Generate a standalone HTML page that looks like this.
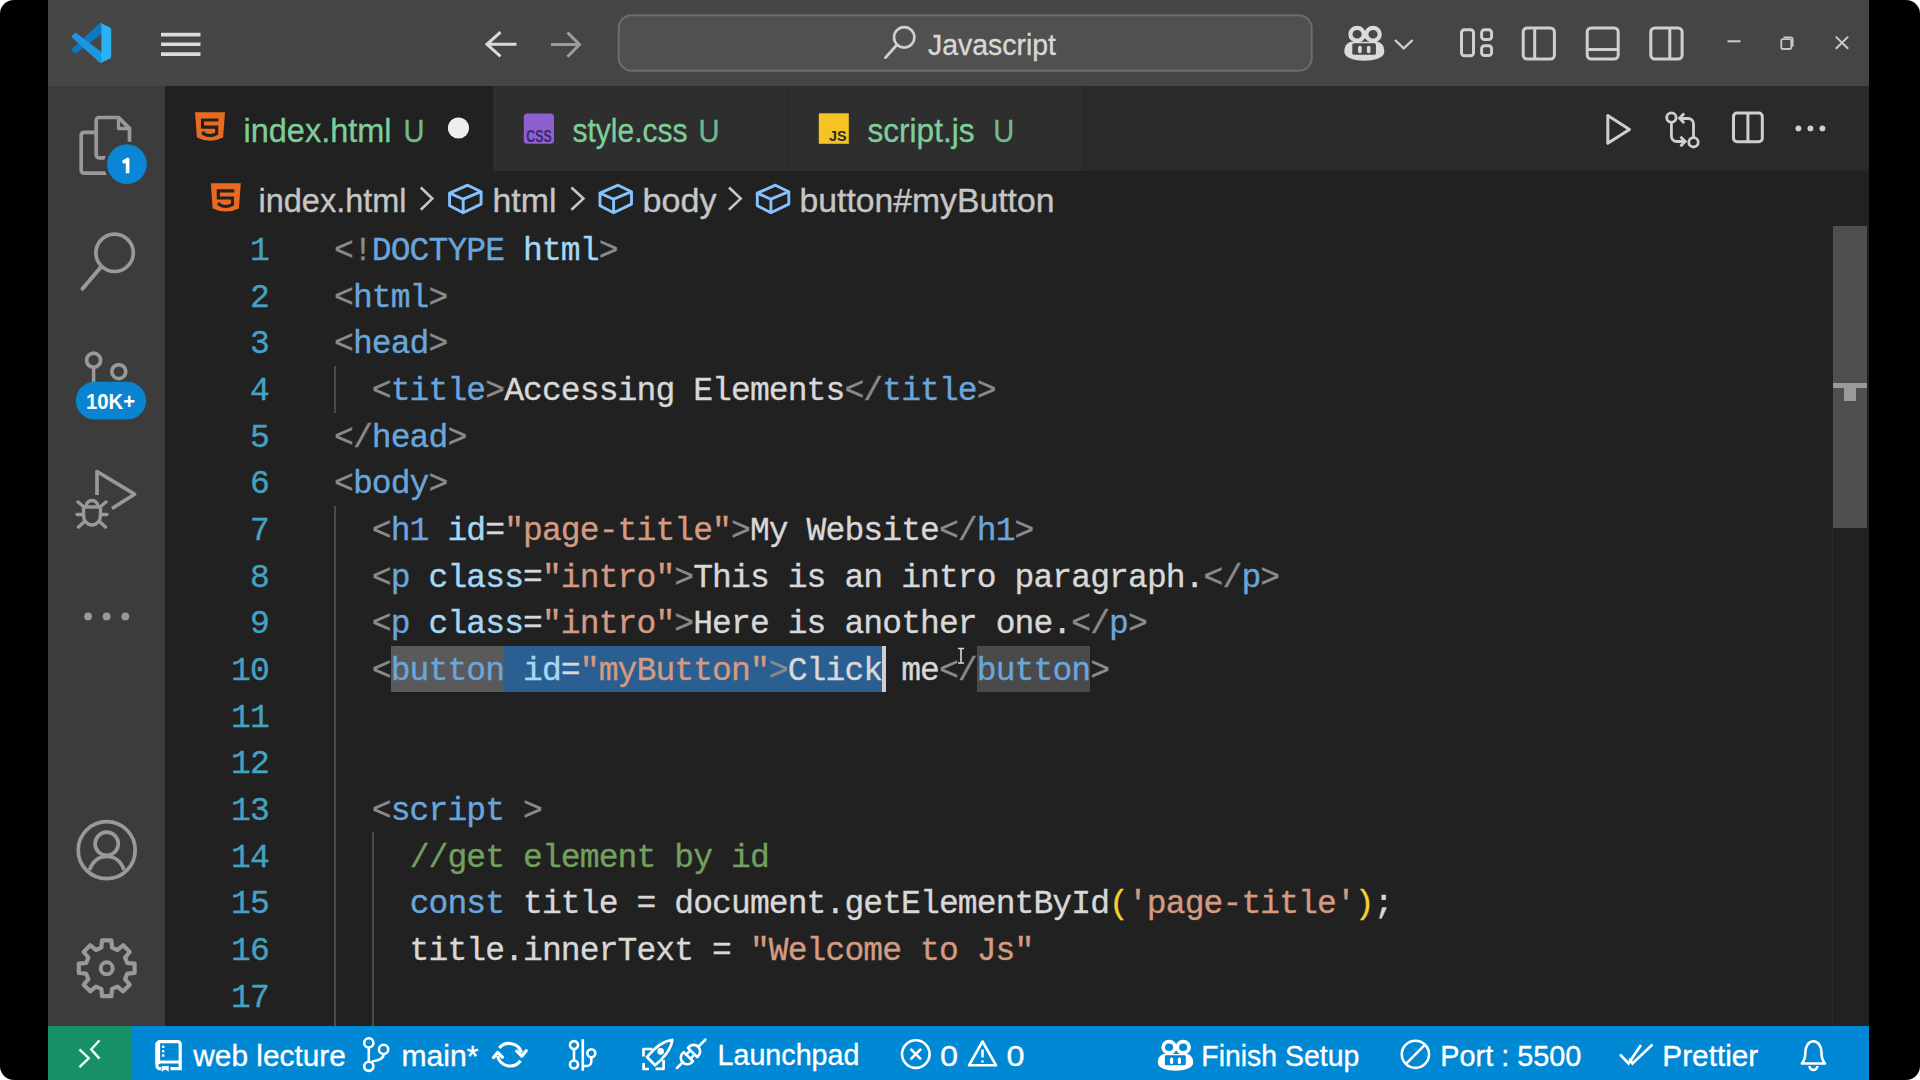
<!DOCTYPE html>
<html><head><meta charset="utf-8"><style>
*{margin:0;padding:0;box-sizing:border-box}
html,body{width:1920px;height:1080px;overflow:hidden;background:#fff}
#frame{position:absolute;left:0;top:0;width:1920px;height:1080px;background:#000;border-radius:14px;overflow:hidden}
.b{position:absolute}
.code{font-family:"Liberation Mono",monospace;font-size:33px;letter-spacing:-0.9px;white-space:pre;position:absolute;left:334px;height:46.65px;line-height:46.65px;color:#d8d8d8;-webkit-text-stroke:0.35px currentColor}
.ln{font-family:"Liberation Mono",monospace;font-size:33px;letter-spacing:-0.9px;white-space:pre;position:absolute;width:100px;left:168.8px;text-align:right;height:46.65px;line-height:46.65px;color:#45a2c2;-webkit-text-stroke:0.35px currentColor}
.t{color:#8a8a8a}.n{color:#6aa6dc}.a{color:#a6d8f6}.s{color:#d49a82}.x{color:#d8d8d8}.c{color:#72a05e}.y{color:#f2d22e}
svg{position:absolute;left:0;top:0}
text{font-family:"Liberation Sans",sans-serif;white-space:pre}
</style></head><body><div id="frame">
<div class="b" style="left:48px;top:0px;width:1821px;height:86px;background:#454545;"></div>
<div class="b" style="left:48px;top:86px;width:117px;height:940px;background:#3c3c3c;"></div>
<div class="b" style="left:165px;top:86px;width:1704px;height:940px;background:#212121;"></div>
<div class="b" style="left:165px;top:86px;width:1704px;height:85px;background:#2a2a2a;"></div>
<div class="b" style="left:165px;top:86px;width:328px;height:85px;background:#212121;"></div>
<div class="b" style="left:493px;top:86px;width:294px;height:85px;background:#2e2e2e;"></div>
<div class="b" style="left:788px;top:86px;width:294px;height:85px;background:#2e2e2e;"></div>
<div class="b" style="left:787px;top:86px;width:1px;height:85px;background:#252525;"></div>
<div class="b" style="left:48px;top:1026px;width:1821px;height:54px;background:#0088d4;"></div>
<div class="b" style="left:48px;top:1026px;width:83px;height:54px;background:#178f68;"></div>
<div class="b" style="left:390.7px;top:645.8499999999999px;width:113.39999999999999px;height:46.65px;background:#5a5a5a;"></div>
<div class="b" style="left:504.1px;top:645.8499999999999px;width:378.0px;height:46.65px;background:#2b5f91;"></div>
<div class="b" style="left:976.5999999999999px;top:645.8499999999999px;width:113.39999999999999px;height:46.65px;background:#4a4a4a;"></div>
<div class="b" style="left:882.1px;top:645.8499999999999px;width:3.5px;height:46.65px;background:#cfcfcf;"></div>
<div class="b" style="left:333.5px;top:365.95px;width:2.6px;height:46.65px;background:#4a4a4a;"></div>
<div class="b" style="left:333.5px;top:505.9px;width:2.6px;height:520.1px;background:#4a4a4a;"></div>
<div class="b" style="left:371.5px;top:832.4499999999999px;width:2.6px;height:193.55000000000007px;background:#4a4a4a;"></div>
<div class="b" style="left:1833px;top:226px;width:34px;height:302px;background:#4f4f4f;"></div>
<div class="b" style="left:1833px;top:383px;width:34px;height:5px;background:#9a9a9a;"></div>
<div class="b" style="left:1844px;top:383px;width:12px;height:18px;background:#9a9a9a;"></div>
<div class="b" style="left:1832px;top:528px;width:1px;height:498px;background:#2c2c2c;"></div>
<div class="ln" style="top:229.10px">1</div>
<div class="ln" style="top:275.75px">2</div>
<div class="ln" style="top:322.40px">3</div>
<div class="ln" style="top:369.05px">4</div>
<div class="ln" style="top:415.70px">5</div>
<div class="ln" style="top:462.35px">6</div>
<div class="ln" style="top:509.00px">7</div>
<div class="ln" style="top:555.65px">8</div>
<div class="ln" style="top:602.30px">9</div>
<div class="ln" style="top:648.95px">10</div>
<div class="ln" style="top:695.60px">11</div>
<div class="ln" style="top:742.25px">12</div>
<div class="ln" style="top:788.90px">13</div>
<div class="ln" style="top:835.55px">14</div>
<div class="ln" style="top:882.20px">15</div>
<div class="ln" style="top:928.85px">16</div>
<div class="ln" style="top:975.50px">17</div>
<div class="code" style="top:229.10px"><span class="t">&lt;!</span><span class="n">DOCTYPE</span> <span class="a">html</span><span class="t">&gt;</span></div>
<div class="code" style="top:275.75px"><span class="t">&lt;</span><span class="n">html</span><span class="t">&gt;</span></div>
<div class="code" style="top:322.40px"><span class="t">&lt;</span><span class="n">head</span><span class="t">&gt;</span></div>
<div class="code" style="top:369.05px">  <span class="t">&lt;</span><span class="n">title</span><span class="t">&gt;</span>Accessing Elements<span class="t">&lt;/</span><span class="n">title</span><span class="t">&gt;</span></div>
<div class="code" style="top:415.70px"><span class="t">&lt;/</span><span class="n">head</span><span class="t">&gt;</span></div>
<div class="code" style="top:462.35px"><span class="t">&lt;</span><span class="n">body</span><span class="t">&gt;</span></div>
<div class="code" style="top:509.00px">  <span class="t">&lt;</span><span class="n">h1</span> <span class="a">id</span>=<span class="s">"page-title"</span><span class="t">&gt;</span>My Website<span class="t">&lt;/</span><span class="n">h1</span><span class="t">&gt;</span></div>
<div class="code" style="top:555.65px">  <span class="t">&lt;</span><span class="n">p</span> <span class="a">class</span>=<span class="s">"intro"</span><span class="t">&gt;</span>This is an intro paragraph.<span class="t">&lt;/</span><span class="n">p</span><span class="t">&gt;</span></div>
<div class="code" style="top:602.30px">  <span class="t">&lt;</span><span class="n">p</span> <span class="a">class</span>=<span class="s">"intro"</span><span class="t">&gt;</span>Here is another one.<span class="t">&lt;/</span><span class="n">p</span><span class="t">&gt;</span></div>
<div class="code" style="top:648.95px">  <span class="t">&lt;</span><span class="n">button</span> <span class="a">id</span>=<span class="s">"myButton"</span><span class="t">&gt;</span>Click me<span class="t">&lt;/</span><span class="n">button</span><span class="t">&gt;</span></div>
<div class="code" style="top:788.90px">  <span class="t">&lt;</span><span class="n">script</span> <span class="t">&gt;</span></div>
<div class="code" style="top:835.55px">    <span class="c">//get element by id</span></div>
<div class="code" style="top:882.20px">    <span class="n">const</span> title = document.getElementById<span class="y">(</span><span class="s">'page-title'</span><span class="y">)</span>;</div>
<div class="code" style="top:928.85px">    title.innerText = <span class="s">"Welcome to Js"</span></div>
<svg width="1920" height="1080" viewBox="0 0 1920 1080">
<g transform="translate(71.9,23.2) scale(0.393,0.397)"><path fill="#0b78c4" d="M96.4614 10.7962L75.8569 0.875542C73.4719 -0.272773 70.6217 0.211611 68.75 2.08333L1.29858 63.5832C-0.515693 65.2373 -0.513607 68.0937 1.30308 69.7452L6.81272 74.754C8.29793 76.1042 10.5347 76.2036 12.1338 74.9905L93.3609 13.3699C96.086 11.3026 100 13.2462 100 16.6667V16.4275C100 14.0265 98.6246 11.8378 96.4614 10.7962Z"/><path fill="#1d96e2" d="M96.4614 89.2038L75.8569 99.1245C73.4719 100.273 70.6217 99.7884 68.75 97.9167L1.29858 36.4169C-0.515693 34.7627 -0.513607 31.9063 1.30308 30.2548L6.81272 25.246C8.29793 23.8958 10.5347 23.7964 12.1338 25.0095L93.3609 86.6301C96.086 88.6974 100 86.7538 100 83.3334V83.5726C100 85.9735 98.6246 88.1622 96.4614 89.2038Z"/><path fill="#2cb0f2" d="M75.8578 99.1263C73.4721 100.274 70.6219 99.7885 68.75 97.9166C71.0564 100.223 75 98.5895 75 95.3278V4.67213C75 1.41039 71.0564 -0.223106 68.75 2.08329C70.6219 0.211402 73.4721 -0.273666 75.8578 0.873633L96.4587 10.7807C98.6234 11.8217 100 14.0112 100 16.4132V83.5871C100 85.9891 98.6234 88.1786 96.4586 89.2196L75.8578 99.1263Z"/></g>
<line x1="161" y1="34.6" x2="200.5" y2="34.6" stroke="#dcdcdc" stroke-width="3.6"/>
<line x1="161" y1="44.3" x2="200.5" y2="44.3" stroke="#dcdcdc" stroke-width="3.6"/>
<line x1="161" y1="54.1" x2="200.5" y2="54.1" stroke="#dcdcdc" stroke-width="3.6"/>
<path d="M500.5 32.2 L487 44.3 L500.5 56.4 M487.5 44.3 H516.5" fill="none" stroke="#dadada" stroke-width="3"/>
<path d="M567.5 32.5 L579.5 44.5 L567.5 56.8 M551 44.5 H579" fill="none" stroke="#9c9c9c" stroke-width="3"/>
<rect x="618.7" y="15.2" width="693" height="55.6" rx="13" fill="#505050" stroke="#6c6c6c" stroke-width="2"/>
<circle cx="904.2" cy="37.3" r="10.2" fill="none" stroke="#d0d0d0" stroke-width="2.6"/>
<line x1="896.8" y1="45" x2="885.5" y2="57.6" stroke="#d0d0d0" stroke-width="2.8" stroke-linecap="round"/>
<text x="928" y="55" font-size="30" fill="#d8d8d8" stroke="#d8d8d8" stroke-width="0.35" font-weight="normal" textLength="128" lengthAdjust="spacingAndGlyphs">Javascript</text>
<g transform="translate(1344.3,25.3) scale(1.0)"><path fill="#dadada" d="M0 26.5 C0 19 4.5 16.5 8 16.5 L32 16.5 C35.5 16.5 40 19 40 26.5 C40 32.5 30 35.5 20 35.5 C10 35.5 0 32.5 0 26.5Z"/><rect x="8" y="18" width="23.6" height="11.4" rx="1.5" fill="#474747"/><rect x="13.8" y="20.5" width="3.6" height="7.4" rx="1.8" fill="#dadada"/><rect x="22.6" y="20.5" width="3.6" height="7.4" rx="1.8" fill="#dadada"/><ellipse cx="12.8" cy="9" rx="6.7" ry="6.4" fill="#474747" stroke="#dadada" stroke-width="4.2"/><ellipse cx="28.7" cy="9" rx="6.7" ry="6.4" fill="#474747" stroke="#dadada" stroke-width="4.2"/></g>
<path d="M1395 40 L1403.8 48.3 L1412.6 40" fill="none" stroke="#cfcfcf" stroke-width="2.4"/>
<rect x="1461.5" y="29.8" width="12" height="25.9" rx="3" fill="none" stroke="#cfcfcf" stroke-width="3"/>
<rect x="1481.6" y="29.8" width="10" height="9.8" rx="3" fill="none" stroke="#cfcfcf" stroke-width="3"/>
<rect x="1481.6" y="45.8" width="10" height="9.8" rx="3" fill="none" stroke="#cfcfcf" stroke-width="3"/>
<rect x="1523.2" y="27.9" width="31.2" height="31.1" rx="4" fill="none" stroke="#cfcfcf" stroke-width="3"/><line x1="1534.7" y1="28" x2="1534.7" y2="59" stroke="#cfcfcf" stroke-width="3"/>
<rect x="1587.2" y="27.9" width="31" height="31.1" rx="4" fill="none" stroke="#cfcfcf" stroke-width="3"/><line x1="1587" y1="49.5" x2="1618" y2="49.5" stroke="#cfcfcf" stroke-width="3"/>
<rect x="1650.8" y="27.9" width="31.3" height="31.1" rx="4" fill="none" stroke="#cfcfcf" stroke-width="3"/><line x1="1669.8" y1="28" x2="1669.8" y2="59" stroke="#cfcfcf" stroke-width="3"/>
<line x1="1727.5" y1="41.3" x2="1740.5" y2="41.3" stroke="#cccccc" stroke-width="2"/>
<rect x="1781.3" y="39.2" width="10" height="9.8" rx="1.8" fill="none" stroke="#c8c8c8" stroke-width="1.8"/>
<path d="M1783.5 37.3 H1790.5 a2.3 2.3 0 0 1 2.3 2.3 V46.5" fill="none" stroke="#c8c8c8" stroke-width="1.6"/>
<path d="M1835.8 36.6 L1848.2 48.8 M1848.2 36.6 L1835.8 48.8" stroke="#cccccc" stroke-width="2"/>
<g transform="translate(194.5,112.3) scale(1.0)"><path fill="#ea6a22" d="M0.5 0 H30.5 L28.6 25.2 Q15.5 31.5 2.4 25.2 Z"/><path fill="none" stroke="#212121" stroke-width="3.1" stroke-linejoin="miter" d="M24 7.7 H8 V14.8 H22.2 V21.3 Q15.5 25.2 8.8 21.3 V19.3"/></g>
<text x="243.5" y="142" font-size="33.5" fill="#7ecd9a" stroke="#7ecd9a" stroke-width="0.35" font-weight="normal" textLength="148" lengthAdjust="spacingAndGlyphs">index.html</text>
<text x="403.5" y="142" font-size="31" fill="#70b98a" stroke="#70b98a" stroke-width="0.35" font-weight="normal" textLength="21" lengthAdjust="spacingAndGlyphs">U</text>
<circle cx="458.5" cy="128" r="10.6" fill="#eeeeee"/>
<rect x="523.8" y="113.5" width="30.2" height="30.3" rx="3.5" fill="#8d5fd3"/>
<text x="526.2" y="141.6" font-size="16.5" fill="#3a2a60" font-weight="bold" textLength="25.5" lengthAdjust="spacingAndGlyphs">CSS</text>
<text x="572.5" y="142" font-size="33.5" fill="#7ecd9a" stroke="#7ecd9a" stroke-width="0.35" font-weight="normal" textLength="115" lengthAdjust="spacingAndGlyphs">style.css</text>
<text x="698.5" y="142" font-size="31" fill="#70b98a" stroke="#70b98a" stroke-width="0.35" font-weight="normal" textLength="21" lengthAdjust="spacingAndGlyphs">U</text>
<rect x="818.8" y="113.3" width="30" height="30.5" fill="#f5c423"/>
<text x="829" y="141.2" font-size="15.5" fill="#2a2a2a" font-weight="bold" textLength="17.5" lengthAdjust="spacingAndGlyphs">JS</text>
<text x="867.5" y="142" font-size="33.5" fill="#7ecd9a" stroke="#7ecd9a" stroke-width="0.35" font-weight="normal" textLength="107" lengthAdjust="spacingAndGlyphs">script.js</text>
<text x="993.2" y="142" font-size="31" fill="#70b98a" stroke="#70b98a" stroke-width="0.35" font-weight="normal" textLength="21" lengthAdjust="spacingAndGlyphs">U</text>
<path d="M1607.8 115.5 L1629.5 129.4 L1607.8 143.3 Z" fill="none" stroke="#cfcfcf" stroke-width="3" stroke-linejoin="round"/>
<circle cx="1671.4" cy="117.6" r="4.7" fill="none" stroke="#cfcfcf" stroke-width="2.8"/>
<circle cx="1693.5" cy="142.3" r="4.7" fill="none" stroke="#cfcfcf" stroke-width="2.8"/>
<path d="M1671.4 122.3 V136 a5.5 5.5 0 0 0 5.5 5.5 H1685 M1680.5 136.8 L1685.2 141.5 L1680.5 146.2" fill="none" stroke="#cfcfcf" stroke-width="2.8"/>
<path d="M1693.5 137.6 V124 a5.5 5.5 0 0 0 -5.5 -5.5 H1679.5 M1684.2 113.5 L1679.5 118.2 L1684.2 122.9" fill="none" stroke="#cfcfcf" stroke-width="2.8"/>
<rect x="1733.5" y="113" width="28.8" height="28.7" rx="3.5" fill="none" stroke="#cfcfcf" stroke-width="3"/><line x1="1747.9" y1="113" x2="1747.9" y2="142" stroke="#cfcfcf" stroke-width="3"/>
<circle cx="1798.4" cy="128.4" r="2.9" fill="#cfcfcf"/>
<circle cx="1810.4" cy="128.4" r="2.9" fill="#cfcfcf"/>
<circle cx="1822.4" cy="128.4" r="2.9" fill="#cfcfcf"/>
<g transform="translate(210.3,183.2) scale(1.0)"><path fill="#ea6a22" d="M0.5 0 H30.5 L28.6 25.2 Q15.5 31.5 2.4 25.2 Z"/><path fill="none" stroke="#212121" stroke-width="3.1" stroke-linejoin="miter" d="M24 7.7 H8 V14.8 H22.2 V21.3 Q15.5 25.2 8.8 21.3 V19.3"/></g>
<text x="258.5" y="211.5" font-size="33.5" fill="#c6c6c6" stroke="#c6c6c6" stroke-width="0.35" font-weight="normal" textLength="148" lengthAdjust="spacingAndGlyphs">index.html</text>
<path d="M420.8 187.5 L432.3 198.6 L420.8 209.7" fill="none" stroke="#c6c6c6" stroke-width="2.6"/>
<g transform="translate(447.6,183.5)" fill="none" stroke="#85c2fb" stroke-width="2.9" stroke-linejoin="round"><path d="M2 9.6 L20.1 1.7 L33.5 8.2 L15.6 15.7 Z"/><path d="M2 9.6 V22.2 L15.6 29.2 L33.5 20.6 V8.2 M15.6 15.7 V29.2"/></g>
<text x="492.5" y="211.5" font-size="33.5" fill="#c6c6c6" stroke="#c6c6c6" stroke-width="0.35" font-weight="normal" textLength="64" lengthAdjust="spacingAndGlyphs">html</text>
<path d="M571.4 187.5 L583.4 198.6 L571.4 209.7" fill="none" stroke="#c6c6c6" stroke-width="2.6"/>
<g transform="translate(598,183.5)" fill="none" stroke="#85c2fb" stroke-width="2.9" stroke-linejoin="round"><path d="M2 9.6 L20.1 1.7 L33.5 8.2 L15.6 15.7 Z"/><path d="M2 9.6 V22.2 L15.6 29.2 L33.5 20.6 V8.2 M15.6 15.7 V29.2"/></g>
<text x="642.5" y="211.5" font-size="33.5" fill="#c6c6c6" stroke="#c6c6c6" stroke-width="0.35" font-weight="normal" textLength="74" lengthAdjust="spacingAndGlyphs">body</text>
<path d="M729 187.5 L740.7 198.6 L729 209.7" fill="none" stroke="#c6c6c6" stroke-width="2.6"/>
<g transform="translate(755.3,183.5)" fill="none" stroke="#85c2fb" stroke-width="2.9" stroke-linejoin="round"><path d="M2 9.6 L20.1 1.7 L33.5 8.2 L15.6 15.7 Z"/><path d="M2 9.6 V22.2 L15.6 29.2 L33.5 20.6 V8.2 M15.6 15.7 V29.2"/></g>
<text x="799.5" y="211.5" font-size="33.5" fill="#c6c6c6" stroke="#c6c6c6" stroke-width="0.35" font-weight="normal" textLength="255" lengthAdjust="spacingAndGlyphs">button#myButton</text>
<path d="M958 648.5 H964 M961 648.5 V663 M958 663 H964" stroke="#d8d8d8" stroke-width="1.6" fill="none"/>
<path d="M95 132.3 H84 a2.8 2.8 0 0 0 -2.8 2.8 V170.4 a2.8 2.8 0 0 0 2.8 2.8 H112" fill="none" stroke="#999999" stroke-width="3.7"/>
<path d="M99 117.5 H118.5 L129.5 128.5 V155 a2.8 2.8 0 0 1 -2.8 2.8 H99 a2.8 2.8 0 0 1 -2.8 -2.8 V120.3 a2.8 2.8 0 0 1 2.8 -2.8 Z" fill="none" stroke="#999999" stroke-width="3.7"/>
<path d="M118.5 117.5 V128.5 H129.5 Z" fill="none" stroke="#999999" stroke-width="3.3" stroke-linejoin="round"/>
<circle cx="126.9" cy="164.2" r="22.8" fill="#3c3c3c"/>
<circle cx="126.9" cy="164.2" r="19.9" fill="#0a86d4"/>
<path d="M122.8 162.6 L127.6 159.4 V173.3" fill="none" stroke="#ffffff" stroke-width="3.6" stroke-linejoin="round"/>
<circle cx="114.6" cy="252.8" r="18.7" fill="none" stroke="#999999" stroke-width="3.7"/>
<line x1="101" y1="267" x2="82.5" y2="288.8" stroke="#999999" stroke-width="4" stroke-linecap="round"/>
<circle cx="93.6" cy="360.2" r="7" fill="none" stroke="#999999" stroke-width="3.7"/>
<circle cx="118.8" cy="371.6" r="7" fill="none" stroke="#999999" stroke-width="3.7"/>
<line x1="93.6" y1="367.2" x2="93.6" y2="384" stroke="#999999" stroke-width="3.5"/>
<rect x="75.8" y="381.7" width="70.3" height="37.9" rx="18.95" fill="#0a84d0"/>
<text x="86" y="409" font-size="21.5" font-weight="bold" fill="#ffffff" textLength="49" lengthAdjust="spacingAndGlyphs">10K+</text>
<path d="M97 495 V471.5 L134.5 494.2 L112 508.5" fill="none" stroke="#999999" stroke-width="3.7" stroke-linejoin="round"/>
<g fill="none" stroke="#999999" stroke-width="3.4" stroke-linecap="round" stroke-linejoin="round"><path d="M86 506.5 a6 6 0 0 1 12 0"/><path d="M83.5 507 H100.5 V515.5 a8.5 9.5 0 0 1 -17 0 Z"/><path d="M78 502 L83.5 506.5 M106 502 L100.5 506.5 M77 514.5 H83.5 M100.5 514.5 H107 M78.5 527 L84.5 521.5 M105.5 527 L99.5 521.5"/></g>
<circle cx="88.1" cy="616.4" r="3.9" fill="#999999"/>
<circle cx="106.6" cy="616.4" r="3.9" fill="#999999"/>
<circle cx="125.3" cy="616.4" r="3.9" fill="#999999"/>
<circle cx="106.7" cy="850.2" r="28.5" fill="none" stroke="#999999" stroke-width="3.7"/>
<circle cx="106.7" cy="843.8" r="11.6" fill="none" stroke="#999999" stroke-width="3.7"/>
<path d="M89.5 870 C93 860 99 856.5 106.7 856.5 C114.4 856.5 120.5 860 124 870" fill="none" stroke="#999999" stroke-width="3.7"/>
<path d="M101.37 947.68 L102.03 940.39 L111.37 940.39 L112.03 947.68 L117.51 949.95 L123.13 945.26 L129.74 951.87 L125.05 957.49 L127.32 962.97 L134.61 963.63 L134.61 972.97 L127.32 973.63 L125.05 979.11 L129.74 984.73 L123.13 991.34 L117.51 986.65 L112.03 988.92 L111.37 996.21 L102.03 996.21 L101.37 988.92 L95.89 986.65 L90.27 991.34 L83.66 984.73 L88.35 979.11 L86.08 973.63 L78.79 972.97 L78.79 963.63 L86.08 962.97 L88.35 957.49 L83.66 951.87 L90.27 945.26 L95.89 949.95 Z" fill="none" stroke="#999999" stroke-width="4.2" stroke-linejoin="round"/>
<circle cx="106.7" cy="968.3" r="6" fill="none" stroke="#999999" stroke-width="4"/>
<path d="M79.5 1049.3 L88.8 1058.2 L79.5 1067.2 M99.5 1040.2 L91.2 1049.4 L99.5 1058.6" fill="none" stroke="#e8fff6" stroke-width="2.4"/>
<path d="M157 1066.5 V1044.5 a2.8 2.8 0 0 1 2.8 -2.8 H177.7 a2.5 2.5 0 0 1 2.5 2.5 V1068.6 H170.4 M161.2 1068.6 H159.8 a2.8 2.8 0 0 1 -2.8 -2.8" fill="none" stroke="#fff" stroke-width="3.2"/>
<rect x="155.5" y="1043" width="4.6" height="21" fill="#fff"/>
<path d="M158.5 1062 H180" fill="none" stroke="#fff" stroke-width="3"/>
<path d="M161.7 1066 H168.7 V1071.8 L165.2 1069.5 L161.7 1071.8 Z" fill="#fff"/>
<rect x="162" y="1045.6" width="2.4" height="2.4" fill="#fff"/>
<rect x="162" y="1050.0" width="2.4" height="2.4" fill="#fff"/>
<rect x="162" y="1054.3" width="2.4" height="2.4" fill="#fff"/>
<text x="193.3" y="1065.8" font-size="30" fill="#ffffff" stroke="#ffffff" stroke-width="0.35" font-weight="normal" textLength="152.5" lengthAdjust="spacingAndGlyphs">web lecture</text>
<circle cx="368.8" cy="1042.9" r="4.6" fill="none" stroke="#ffffff" stroke-width="2.6"/><circle cx="368.8" cy="1066.3" r="4.6" fill="none" stroke="#ffffff" stroke-width="2.6"/><circle cx="383.6" cy="1049.4" r="4.6" fill="none" stroke="#ffffff" stroke-width="2.6"/>
<path d="M368.8 1047.5 V1061.7 M383.6 1054 C383.6 1059 379 1060 372 1061.5" fill="none" stroke="#ffffff" stroke-width="2.6"/>
<text x="401.5" y="1065.8" font-size="30" fill="#ffffff" stroke="#ffffff" stroke-width="0.35" font-weight="normal" textLength="77" lengthAdjust="spacingAndGlyphs">main*</text>
<path d="M499.2 1048 A13 13 0 0 1 521.5 1052.5 M520.5 1060.8 A13 13 0 0 1 497.5 1056" fill="none" stroke="#fff" stroke-width="3.1"/>
<path d="M516.8 1051.2 L521.8 1056.2 L526.2 1050.8 M493.6 1057.6 L497.6 1052.4 L502.4 1057.2" fill="none" stroke="#fff" stroke-width="3.2" stroke-linejoin="round" stroke-linecap="round"/>
<circle cx="574" cy="1045.1" r="4" fill="none" stroke="#ffffff" stroke-width="2.6"/><circle cx="574" cy="1064.5" r="4" fill="none" stroke="#ffffff" stroke-width="2.6"/><circle cx="591.3" cy="1053.3" r="4" fill="none" stroke="#ffffff" stroke-width="2.6"/>
<path d="M574 1049.1 V1060.5 M582.8 1039.2 V1070.8 M591.3 1057.3 V1061.5 a4.5 4.5 0 0 1 -4.5 4.5 H582.8" fill="none" stroke="#ffffff" stroke-width="2.6"/>
<path d="M647 1057 C653 1049.5 662.5 1041 672.3 1039.8 C671.2 1049.5 662.5 1059.5 655 1065.3 Z" fill="none" stroke="#fff" stroke-width="2.7" stroke-linejoin="round"/>
<path d="M652.3 1049 H643.5 V1056.5 M655.5 1068.8 H663.6 V1060" fill="none" stroke="#fff" stroke-width="2.7" stroke-linejoin="round"/>
<path d="M643.6 1063 V1069 H649" fill="none" stroke="#fff" stroke-width="2.7"/>
<circle cx="660.6" cy="1051.4" r="3.3" fill="#fff"/>
<g transform="translate(691.5,1053.5) rotate(-45)" fill="none" stroke="#fff" stroke-width="2.6" stroke-linejoin="round" stroke-linecap="round"><path d="M-20.5 0 H-12"/><path d="M-4.5 -6.5 V6.5 H-6 A6.5 6.5 0 0 1 -6 -6.5 Z"/><path d="M-4.5 -3 H-0.5 M-4.5 3 H-0.5"/><path d="M1.5 -6.5 V6.5 H3 A6.5 6.5 0 0 0 3 -6.5 Z"/><path d="M9.5 0 H19.5"/></g>
<text x="717.5" y="1065.2" font-size="30" fill="#ffffff" stroke="#ffffff" stroke-width="0.35" font-weight="normal" textLength="142" lengthAdjust="spacingAndGlyphs">Launchpad</text>
<circle cx="915.8" cy="1054.1" r="13.8" fill="none" stroke="#ffffff" stroke-width="2.6"/>
<path d="M910.5 1048.8 L921.1 1059.4 M921.1 1048.8 L910.5 1059.4" fill="none" stroke="#ffffff" stroke-width="2.6"/>
<text x="940" y="1065.5" font-size="30" fill="#ffffff" stroke="#ffffff" stroke-width="0.35" font-weight="normal" textLength="18" lengthAdjust="spacingAndGlyphs">0</text>
<path d="M982.5 1041.5 L996 1065.3 H969 Z" fill="none" stroke="#ffffff" stroke-width="2.6" stroke-linejoin="round"/>
<path d="M982.5 1049.5 V1057.5 M982.5 1060.5 V1062.5" fill="none" stroke="#ffffff" stroke-width="2.6"/>
<text x="1006.5" y="1065.5" font-size="30" fill="#ffffff" stroke="#ffffff" stroke-width="0.35" font-weight="normal" textLength="18" lengthAdjust="spacingAndGlyphs">0</text>
<g transform="translate(1157.8,1039.3) scale(0.885)"><path fill="#ffffff" d="M0 26.5 C0 19 4.5 16.5 8 16.5 L32 16.5 C35.5 16.5 40 19 40 26.5 C40 32.5 30 35.5 20 35.5 C10 35.5 0 32.5 0 26.5Z"/><rect x="8" y="18" width="23.6" height="11.4" rx="1.5" fill="#0088d4"/><rect x="13.8" y="20.5" width="3.6" height="7.4" rx="1.8" fill="#ffffff"/><rect x="22.6" y="20.5" width="3.6" height="7.4" rx="1.8" fill="#ffffff"/><ellipse cx="12.8" cy="9" rx="6.7" ry="6.4" fill="#0088d4" stroke="#ffffff" stroke-width="4.2"/><ellipse cx="28.7" cy="9" rx="6.7" ry="6.4" fill="#0088d4" stroke="#ffffff" stroke-width="4.2"/></g>
<text x="1201.3" y="1065.8" font-size="30" fill="#ffffff" stroke="#ffffff" stroke-width="0.35" font-weight="normal" textLength="158" lengthAdjust="spacingAndGlyphs">Finish Setup</text>
<circle cx="1415.4" cy="1054.3" r="13.6" fill="none" stroke="#ffffff" stroke-width="2.6"/>
<line x1="1424.8" y1="1044.8" x2="1406" y2="1063.8" fill="none" stroke="#ffffff" stroke-width="2.6"/>
<text x="1440.3" y="1065.8" font-size="30" fill="#ffffff" stroke="#ffffff" stroke-width="0.35" font-weight="normal" textLength="141" lengthAdjust="spacingAndGlyphs">Port : 5500</text>
<path d="M1620 1054.5 L1628.5 1063.5 L1641 1045 M1629.5 1058.5 L1632.5 1063.5 L1652.5 1044.5" fill="none" stroke="#ffffff" stroke-width="2.6"/>
<text x="1662.3" y="1065.6" font-size="30" fill="#ffffff" stroke="#ffffff" stroke-width="0.35" font-weight="normal" textLength="96" lengthAdjust="spacingAndGlyphs">Prettier</text>
<path d="M1801.8 1063.5 H1825 C1822 1060 1821.5 1057 1821.5 1053 C1821.5 1046 1818 1041.3 1813.4 1041.3 C1808.8 1041.3 1805.3 1046 1805.3 1053 C1805.3 1057 1804.8 1060 1801.8 1063.5 Z" fill="none" stroke="#ffffff" stroke-width="2.6" stroke-linejoin="round"/>
<path d="M1809.5 1066 a3.9 3.9 0 0 0 7.8 0" fill="none" stroke="#ffffff" stroke-width="2.6"/>
</svg>
</div></body></html>
